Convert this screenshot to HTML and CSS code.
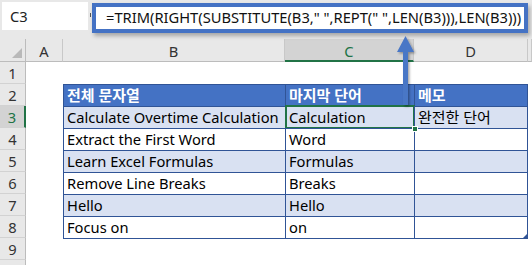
FILE: index.html
```html
<!DOCTYPE html>
<html lang="ko">
<head>
<meta charset="utf-8">
<link rel="stylesheet" href="styles.css">
</head>
<body>
<div class="app">
  <div class="fbar">
    <div class="namebox">C3</div>
    <div class="grip"></div>
    <div class="formula">=TRIM(RIGHT(SUBSTITUTE(B3," ",REPT(" ",LEN(B3))),LEN(B3)))</div>
  </div>
  <div class="sheet">
    <div class="row hrow">
      <div class="rh corner"><span class="tri"></span></div>
      <div class="ch ca">A</div>
      <div class="ch cb">B</div>
      <div class="ch cc sel">C</div>
      <div class="ch cd">D</div>
      <div class="ch ce"></div>
    </div>
    <div class="row">
      <div class="rh">1</div>
      <div class="cell ca"></div><div class="cell cb"></div><div class="cell cc"></div><div class="cell cd"></div><div class="cell ce"></div>
    </div>
    <div class="row">
      <div class="rh">2</div>
      <div class="cell ca"></div>
      <div class="cell cb t th ko">전체 문자열</div>
      <div class="cell cc t th ko">마지막 단어</div>
      <div class="cell cd t tr th ko">메모</div>
      <div class="cell ce"></div>
    </div>
    <div class="row">
      <div class="rh sel">3</div>
      <div class="cell ca"></div>
      <div class="cell cb t band">Calculate Overtime Calculation</div>
      <div class="cell cc t band active">Calculation<span class="handle"></span></div>
      <div class="cell cd t tr band ko">완전한 단어</div>
      <div class="cell ce"></div>
    </div>
    <div class="row">
      <div class="rh">4</div>
      <div class="cell ca"></div>
      <div class="cell cb t">Extract the First Word</div>
      <div class="cell cc t">Word</div>
      <div class="cell cd t tr"></div>
      <div class="cell ce"></div>
    </div>
    <div class="row">
      <div class="rh">5</div>
      <div class="cell ca"></div>
      <div class="cell cb t band">Learn Excel Formulas</div>
      <div class="cell cc t band">Formulas</div>
      <div class="cell cd t tr band"></div>
      <div class="cell ce"></div>
    </div>
    <div class="row">
      <div class="rh">6</div>
      <div class="cell ca"></div>
      <div class="cell cb t">Remove Line Breaks</div>
      <div class="cell cc t">Breaks</div>
      <div class="cell cd t tr"></div>
      <div class="cell ce"></div>
    </div>
    <div class="row">
      <div class="rh">7</div>
      <div class="cell ca"></div>
      <div class="cell cb t band">Hello</div>
      <div class="cell cc t band">Hello</div>
      <div class="cell cd t tr band"></div>
      <div class="cell ce"></div>
    </div>
    <div class="row">
      <div class="rh">8</div>
      <div class="cell ca"></div>
      <div class="cell cb t">Focus on</div>
      <div class="cell cc t">on</div>
      <div class="cell cd t tr"><span class="resize"></span></div>
      <div class="cell ce"></div>
    </div>
    <div class="row">
      <div class="rh">9</div>
      <div class="cell ca"></div>
      <div class="cell cb tb"></div><div class="cell cc tb"></div><div class="cell cd tb"></div>
      <div class="cell ce"></div>
    </div>
    <div class="row">
      <div class="rh"></div>
      <div class="cell ca"></div><div class="cell cb"></div><div class="cell cc"></div><div class="cell cd"></div><div class="cell ce"></div>
    </div>
  </div>
  <svg class="arrow" width="532" height="265" viewBox="0 0 532 265">
    <defs>
      <filter id="sh" x="-50%" y="-20%" width="200%" height="140%">
        <feDropShadow dx="1.5" dy="1.5" stdDeviation="1.2" flood-color="#000" flood-opacity="0.35"/>
      </filter>
    </defs>
    <g filter="url(#sh)" fill="#4a77c6">
      <polygon points="405.5,36 414,52 397,52"/>
      <rect x="403" y="51" width="5" height="54"/>
    </g>
  </svg>
</div>
</body>
</html>
```

FILE: styles.css
```css
* { box-sizing: border-box; }
html, body { margin: 0; padding: 0; background: #fff; }
body {
  font-family: "Noto Sans", "Noto Sans CJK KR", sans-serif;
  font-size: 14.7px;
  color: #000;
  overflow: hidden;
}
.app { position: relative; width: 532px; height: 265px; overflow: hidden; }

.fbar {
  height: 39px;
  background: #e8e8e8;
  display: flex;
  align-items: flex-start;
}
.namebox {
  margin: 2px 0 0 2px;
  width: 86px;
  height: 28px;
  background: #fff;
  padding-left: 8px;
  line-height: 28px;
  color: #222;
}
.grip {
  margin: 13px 0 0 2px;
  width: 1px;
  height: 4px;
  background: #555;
}
.formula {
  margin: 3px 0 0 1px;
  width: 436px;
  height: 30px;
  border: 4px solid #4472c4;
  background: #fff;
  padding-left: 10px;
  line-height: 20px;
  white-space: nowrap;
  overflow: hidden;
  color: #111;
  box-shadow: 2px 3px 4px rgba(0,0,0,0.28);
  position: relative;
  z-index: 2;
}

.sheet { display: flex; flex-direction: column; }
.row { display: flex; height: 22px; }
.hrow { height: 23px; }

.rh {
  width: 26px;
  flex: none;
  background: #e8e8e8;
  border-right: 1px solid #bcbcbc;
  border-bottom: 1px solid #d2d2d2;
  text-align: center;
  line-height: 22px;
  color: #333;
}
.rh.sel {
  background: #d3d3d3;
  border-right: 2px solid #217346;
  color: #217346;
}
.corner { position: relative; border-bottom: 1px solid #bcbcbc; }
.tri {
  position: absolute;
  right: 3px;
  bottom: 3px;
  width: 10px;
  height: 10px;
  background: #b9b9b9;
  clip-path: polygon(100% 0, 100% 100%, 0 100%);
}

.ch {
  flex: none;
  height: 23px;
  background: #e8e8e8;
  border-right: 1px solid #c8c8c8;
  border-bottom: 1px solid #bcbcbc;
  text-align: center;
  line-height: 22px;
  padding-top: 1px;
  color: #333;
}
.ch.sel {
  background: #d3d3d3;
  border-bottom: 2px solid #217346;
  color: #217346;
}

.ca { width: 37px; flex: none; }
.cb { width: 222px; flex: none; }
.cc { width: 129px; flex: none; }
.cd { width: 114px; flex: none; }
.ce { flex: 1; }

.cell {
  height: 22px;
  line-height: 21px;
  white-space: nowrap;
  overflow: visible;
  padding-left: 3px;
}
.t {
  border-left: 1px solid #305496;
  border-top: 1px solid #305496;
  position: relative;
}
.tr { border-right: 1px solid #305496; }
.tb { border-top: 1px solid #305496; }
.th {
  background: #4472c4;
  color: #fff;
  font-weight: bold;
}
.ko { font-size: 15px; }
.band { background: #d9e1f2; }

.active::after {
  content: "";
  position: absolute;
  left: -1px;
  top: -2px;
  right: -1px;
  bottom: -1px;
  border: 2px solid #217346;
}
.handle {
  position: absolute;
  right: -4px;
  bottom: -4px;
  width: 6px;
  height: 6px;
  background: #217346;
  border: 1px solid #fff;
  z-index: 1;
}
.resize {
  position: absolute;
  right: 0;
  bottom: 0;
  width: 4px;
  height: 4px;
  background: #305496;
  clip-path: polygon(100% 0, 100% 100%, 0 100%);
}

.arrow {
  position: absolute;
  left: 0;
  top: 0;
  pointer-events: none;
  z-index: 3;
}
```
